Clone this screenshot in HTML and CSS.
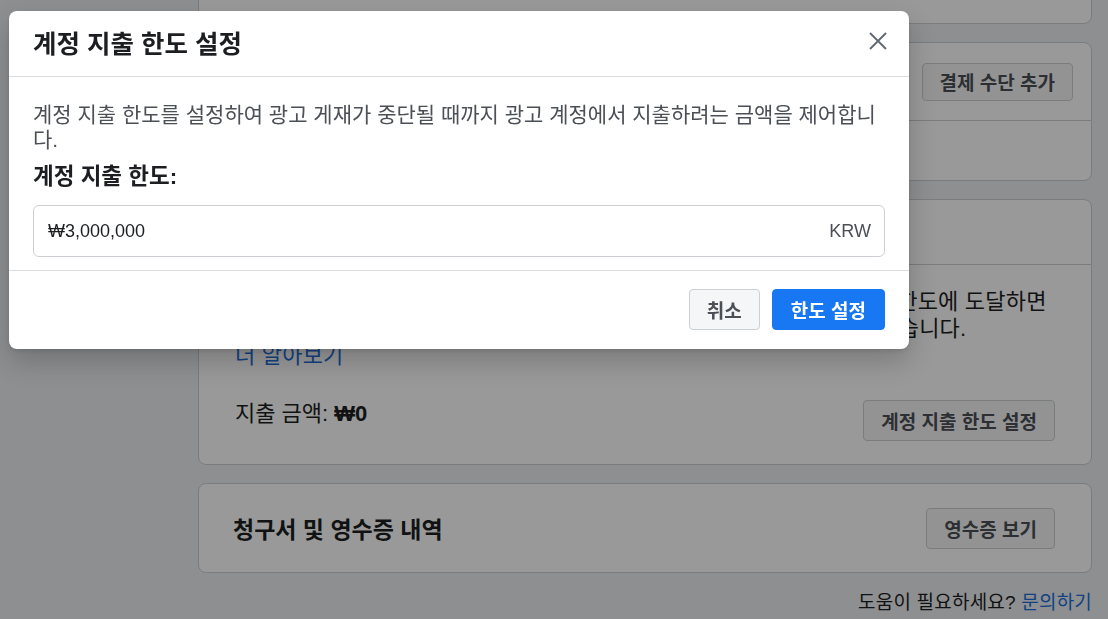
FILE: index.html
```html
<!DOCTYPE html>
<html lang="ko">
<head>
    <meta charset="utf-8">
    <link rel="stylesheet" href="styles.css">
</head>
<body>
    <div class="page">
        <aside class="sidebar"></aside>
        <main class="content">
            <section class="card card-top"></section>

            <section class="card">
                <div class="card-row card-row-top">
                    <button class="btn btn-small">결제 수단 추가</button>
                </div>
                <div class="card-row card-row-empty"></div>
            </section>

            <section class="card">
                <div class="card-head">
                    <h2>계정 지출 한도</h2>
                </div>
                <div class="card-body">
                    <p class="card-text">계정 지출 금액을 관리하려면 계정 지출 한도를 설정하세요. 설정한 지출 한도에 도달하면<br>광고 게재가 중단되며 한도를 변경하거나 재설정할 때까지는 게재되지 않습니다.<br><a href="#" class="link">더 알아보기</a></p>
                    <div class="spend-row">
                        <span class="spend">지출 금액: <b>₩0</b></span>
                        <button class="btn">계정 지출 한도 설정</button>
                    </div>
                </div>
            </section>

            <section class="card card-receipts">
                <h3>청구서 및 영수증 내역</h3>
                <button class="btn">영수증 보기</button>
            </section>

            <p class="help">도움이 필요하세요? <a href="#" class="link">문의하기</a></p>
        </main>
    </div>

    <div class="overlay"></div>

    <div class="modal">
        <div class="modal-header">
            <h1>계정 지출 한도 설정</h1>
            <button class="close" aria-label="닫기">
                <svg width="18" height="18" viewBox="0 0 18 18">
                    <path d="M1 1L17 17M17 1L1 17" stroke="#606770" stroke-width="1.8" fill="none"/>
                </svg>
            </button>
        </div>
        <div class="modal-body">
            <p>계정 지출 한도를 설정하여 광고 게재가 중단될 때까지 광고 계정에서 지출하려는 금액을 제어합니다.</p>
            <label class="field-label" for="limit">계정 지출 한도:</label>
            <div class="field">
                <input id="limit" type="text" value="₩3,000,000">
                <span class="currency">KRW</span>
            </div>
        </div>
        <div class="modal-footer">
            <button class="btn">취소</button>
            <button class="btn btn-primary">한도 설정</button>
        </div>
    </div>
</body>
</html>
```

FILE: styles.css
```css
html, body {
    margin: 0;
    height: 619px;
    overflow: hidden;
}

body {
    font-family: "Liberation Sans", "Noto Sans CJK KR", sans-serif;
    background-color: #eceef0;
    color: #1c1e21;
}

.page {
    display: grid;
    grid-template-columns: 198px 894px;
}

.content {
    display: flex;
    flex-direction: column;
    gap: 18px;
    margin-top: -40px;
}

.card {
    background-color: #fff;
    border: 1px solid #ccd0d5;
    border-radius: 8px;
    box-sizing: border-box;
}

.card-top {
    height: 64px;
}

.card-row {
    display: flex;
    align-items: center;
    justify-content: flex-end;
    padding: 0 18px;
}

.card-row-top {
    height: 77px;
    border-bottom: 1px solid #ccd0d5;
}

.card-row-empty {
    height: 59px;
}

.card-head {
    height: 64px;
    border-bottom: 1px solid #ccd0d5;
    display: flex;
    align-items: center;
    padding: 0 34px;
}

.card-head h2 {
    margin: 0;
    font-size: 23px;
}

.card-body {
    padding: 23px 36px 23px 36px;
}

.card-text {
    margin: 0;
    font-size: 22px;
    line-height: 27px;
    letter-spacing: 0.2px;
    white-space: nowrap;
}

.link {
    color: #216fdb;
    text-decoration: none;
}

.spend-row {
    display: flex;
    align-items: flex-start;
    justify-content: space-between;
    margin-top: 31px;
}

.spend {
    font-size: 22px;
    line-height: 27px;
}

.card-receipts {
    height: 90px;
    display: flex;
    align-items: center;
    justify-content: space-between;
    padding: 0 36px 0 34px;
}

.card-receipts h3 {
    margin: 0;
    font-size: 23px;
}

.help {
    margin: -4px 0 0 0;
    text-align: right;
    font-size: 19px;
    letter-spacing: 0.2px;
}

.btn {
    font-family: inherit;
    font-size: 19px;
    font-weight: bold;
    color: #4b4f56;
    background-color: #f5f6f7;
    border: 1px solid #ccd0d5;
    border-radius: 4px;
    height: 41px;
    padding: 0 17px;
}

.btn-small {
    height: 38px;
}

.btn-primary {
    background-color: #1877f2;
    border-color: #1877f2;
    color: #fff;
    padding: 0 18px;
}

.overlay {
    position: fixed;
    top: 0;
    left: 0;
    width: 100%;
    height: 100%;
    background-color: rgba(0, 0, 0, 0.4);
}

.modal {
    position: absolute;
    top: 11px;
    left: 9px;
    width: 900px;
    background-color: #fff;
    border-radius: 8px;
    box-shadow: 0 12px 28px rgba(0, 0, 0, 0.2), 0 2px 4px rgba(0, 0, 0, 0.1);
}

.modal-header {
    height: 66px;
    box-sizing: border-box;
    display: flex;
    align-items: center;
    justify-content: space-between;
    padding: 0 22px 5px 24px;
    border-bottom: 1px solid #dadde1;
}

.modal-header h1 {
    margin: 0;
    font-size: 25.5px;
    color: #1c1e21;
}

.close {
    background: none;
    border: none;
    padding: 0;
    width: 18px;
    height: 18px;
}

.modal-body {
    padding: 25px 24px 13px 24px;
}

.modal-body p {
    margin: 0;
    font-size: 21px;
    line-height: 25px;
    color: #4b4f56;
}

.field-label {
    display: block;
    margin-top: 13px;
    font-size: 22.5px;
    line-height: 24px;
    font-weight: bold;
}

.field {
    margin-top: 16px;
    height: 52px;
    box-sizing: border-box;
    border: 1px solid #ccd0d5;
    border-radius: 6px;
    display: flex;
    align-items: center;
    padding: 0 13px 0 14px;
}

.field input {
    flex: 1;
    border: none;
    outline: none;
    padding: 0;
    font-family: inherit;
    font-size: 18px;
    color: #1c1e21;
}

.currency {
    font-size: 18px;
    color: #4b4f56;
}

.modal-footer {
    display: flex;
    justify-content: flex-end;
    gap: 12px;
    padding: 18px 24px 19px 24px;
    border-top: 1px solid #dadde1;
}
```
